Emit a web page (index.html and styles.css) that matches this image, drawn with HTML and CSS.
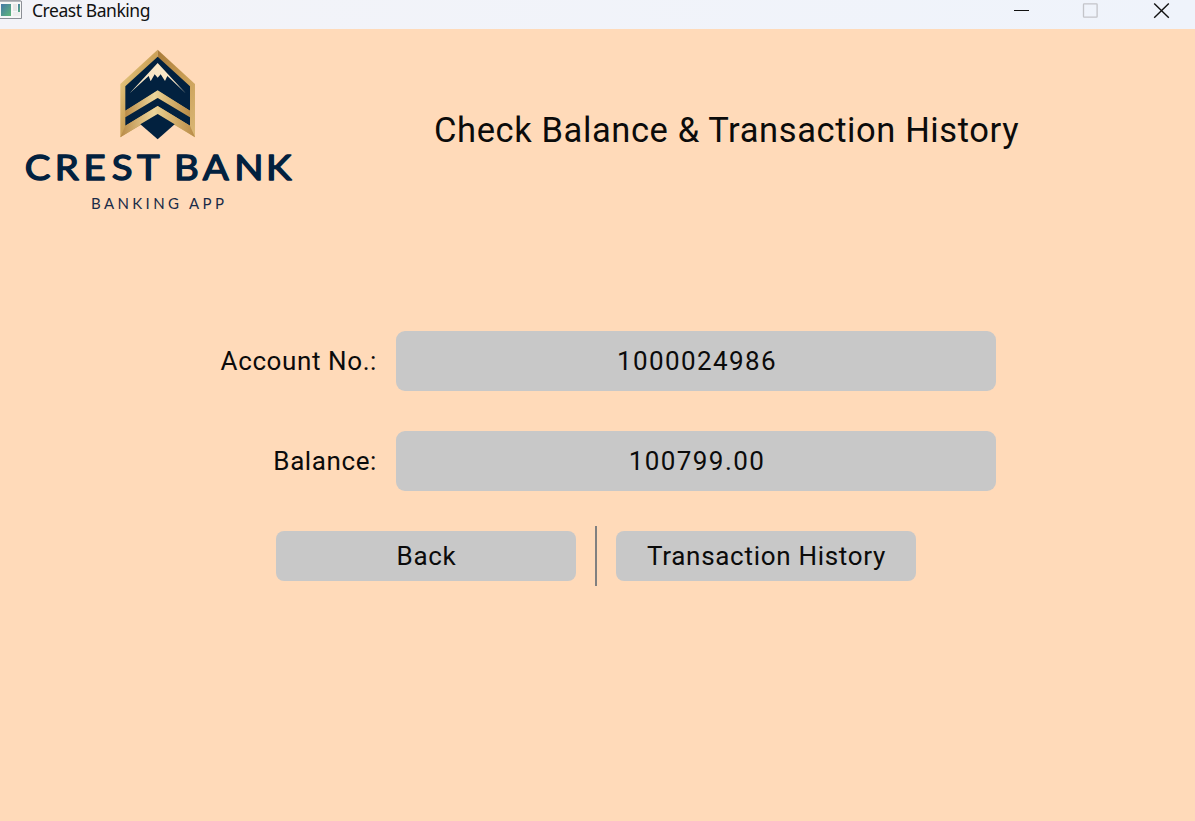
FILE: index.html
```html
<!DOCTYPE html>
<html lang="en">
<head>
<meta charset="utf-8">
<title>Creast Banking</title>
<link rel="stylesheet" href="styles.css">
</head>
<body>
<header class="titlebar">
  <svg class="app-icon" width="22" height="20" viewBox="0 0 22 20">
    <defs><linearGradient id="pane" x1="0" y1="0" x2="1" y2="1"><stop offset="0" stop-color="#4578a8"/><stop offset="1" stop-color="#5fb878"/></linearGradient></defs>
    <path d="M-2 .7H20.5Q21.5.7 21.5 2V18.5H-2Z" fill="#f7f7f7" stroke="#8c8f96"/>
    <path d="M0 1.5H21" stroke="#b5b8bd"/>
    <rect x="1" y="4" width="10" height="12" fill="url(#pane)"/>
    <rect x="13" y="4" width="4" height="7" fill="#e6e6e6"/>
    <rect x="13" y="12" width="7" height="4" fill="#eeeeee"/>
    <rect x="18" y="4" width="2" height="8" fill="url(#pane)"/>
  </svg>
  <span class="window-title">Creast Banking</span>
  <svg class="window-controls" width="195" height="28" viewBox="0 0 195 28" fill="none">
    <path d="M14 10.5H29" stroke="#111"/>
    <rect x="83.5" y="3.8" width="13.6" height="13.4" rx=".6" stroke="#c3c4c9" stroke-width="1.3"/>
    <path d="M154.2 3.4L168.8 17.8M168.8 3.4L154.2 17.8" stroke="#111" stroke-width="1.4"/>
  </svg>
</header>
<main class="screen">
  <div class="top">
    <svg class="logo" width="300" height="191" viewBox="0 29 300 191">
      <defs>
        <linearGradient id="goldL" x1="0" y1="0" x2="1" y2="1"><stop offset="0" stop-color="#f0d792"/><stop offset=".45" stop-color="#cfa65c"/><stop offset="1" stop-color="#b18240"/></linearGradient>
        <linearGradient id="goldR" x1="0" y1="0" x2="1" y2="1"><stop offset="0" stop-color="#a87a38"/><stop offset=".5" stop-color="#c89d55"/><stop offset="1" stop-color="#dbb877"/></linearGradient>
        <linearGradient id="band" x1="0" y1="0" x2="1" y2="0"><stop offset="0" stop-color="#b98b47"/><stop offset=".45" stop-color="#edd69b"/><stop offset=".6" stop-color="#dfbf7c"/><stop offset="1" stop-color="#b98b47"/></linearGradient>
      </defs>
      <g transform="translate(105 40) scale(.33333)">
        <path d="M158 29L46 132V292L158 224Z" fill="url(#goldL)"/>
        <path d="M158 29L270 132V292L158 224Z" fill="url(#goldR)"/>
        <path d="M158 50L255 139V212L158 152L61 212V139Z" fill="#02213f"/>
        <path d="M61 212L158 151L255 212V232L158 174L61 232Z" fill="url(#band)"/>
        <path d="M61 232L158 174L255 232V257L158 198L61 257Z" fill="#02213f"/>
        <path d="M46 292L61 257L158 198L255 257L270 292L158 223Z" fill="url(#band)"/>
        <path d="M158 222L209 253L158 298L106 253Z" fill="#02213f"/>
        <path d="M158 69L242 160L187 108L180 123L167 103L158 113L149 103L137 124L131 108L74 160Z" fill="#fbe7c6"/>
      </g>
      <text class="logo-name" transform="scale(1.08 1)" y="180.5" x="22.9 50.6 77.4 103.5 126.9 161.1 187.8 217 246.4">CRESTBANK</text>
      <text class="logo-tag" x="91" y="209" textLength="133">BANKING APP</text>
    </svg>
    <h1 class="heading">Check Balance &amp; Transaction History</h1>
  </div>
  <div class="fields">
    <span class="label">Account No.:</span>
    <div class="value">1000024986</div>
    <span class="label">Balance:</span>
    <div class="value">100799.00</div>
  </div>
  <div class="actions">
    <button class="button back">Back</button>
    <span class="divider"></span>
    <button class="button history">Transaction History</button>
  </div>
</main>
</body>
</html>
```
FILE: styles.css
```css
body {
  margin: 0;
  width: 1195px;
  height: 821px;
  overflow: hidden;
  background: #ffdab9;
  color: #0b0b0b;
  font-family: Roboto, sans-serif;
}
.titlebar {
  display: flex;
  align-items: flex-start;
  height: 29px;
  background: linear-gradient(90deg, #f3f3f8, #eff3fb);
}
.app-icon { display: block; }
.window-title {
  margin-left: 10px;
  font: 17.5px/20px "Noto Sans", sans-serif;
  letter-spacing: -0.45px;
  color: #111;
}
.window-controls { margin-left: auto; }
.top { display: flex; height: 302px; }
.logo { flex: none; }
.logo-name {
  font: 400 35.5px Lato, sans-serif;
  fill: #02213f;
  stroke: #02213f;
  stroke-width: 1.4px;
  stroke-linejoin: round;
}
.logo-tag {
  font: 400 15px Lato, sans-serif;
  fill: #1a2b48;
}
.heading {
  margin: 81px 0 0 134px;
  font-size: 34.5px;
  line-height: 41px;
  font-weight: 400;
  letter-spacing: 0.6px;
  white-space: nowrap;
}
.fields {
  display: grid;
  grid-template-columns: 377px 600px;
  grid-auto-rows: 60px;
  column-gap: 19px;
  row-gap: 40px;
  align-items: center;
  font-size: 26px;
  letter-spacing: 1.4px;
}
.label {
  text-align: right;
  letter-spacing: 0.6px;
}
.value {
  box-sizing: border-box;
  height: 60px;
  padding-left: 2px;
  line-height: 60px;
  border-radius: 9px;
  background: #c8c8c8;
  text-align: center;
}
.actions {
  display: flex;
  align-items: center;
  gap: 19px;
  margin: 35px 0 0 276px;
  height: 60px;
}
.button {
  width: 300px;
  height: 50px;
  padding: 0 0 0 1px;
  border: 0;
  border-radius: 8px;
  background: #c8c8c8;
  color: inherit;
  font: 26px/50px Roboto, sans-serif;
  letter-spacing: 0.7px;
}
.divider {
  width: 2px;
  height: 60px;
  background: #808080;
}
```
